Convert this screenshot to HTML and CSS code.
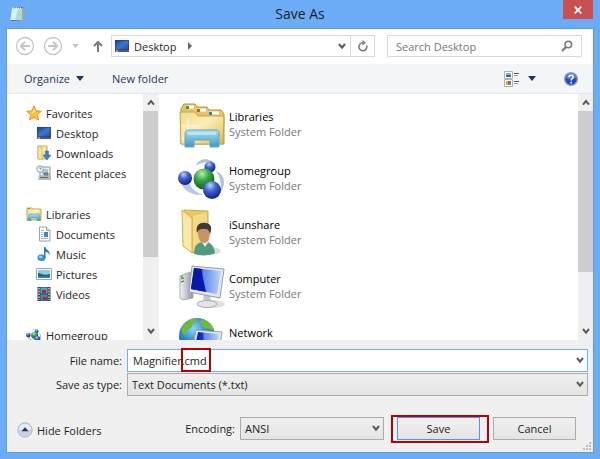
FILE: index.html
```html
<!DOCTYPE html>
<html lang="en">
<head>
    <meta charset="utf-8">
    <title>Save As</title>
    <link rel="stylesheet" href="styles.css">
</head>
<body>
    <!-- shared icons -->
    <svg class="defs" aria-hidden="true">
        <defs>
            <linearGradient id="screen" x1="0" y1="0" x2="1" y2="1">
                <stop offset="0" stop-color="#1c3f96"/>
                <stop offset=".5" stop-color="#3f74d0"/>
                <stop offset="1" stop-color="#2450a8"/>
            </linearGradient>
            <linearGradient id="folder" x1="0" y1="0" x2="1" y2="1">
                <stop offset="0" stop-color="#f3dc8c"/>
                <stop offset=".45" stop-color="#fbefb4"/>
                <stop offset="1" stop-color="#e2bb48"/>
            </linearGradient>
            <linearGradient id="stand" x1="0" y1="0" x2="0" y2="1">
                <stop offset="0" stop-color="#a9e0ee"/>
                <stop offset="1" stop-color="#3f97cf"/>
            </linearGradient>
            <radialGradient id="blueBall" cx=".4" cy=".25" r=".75">
                <stop offset="0" stop-color="#c4d6ff"/>
                <stop offset=".4" stop-color="#4468d8"/>
                <stop offset="1" stop-color="#13207e"/>
            </radialGradient>
            <radialGradient id="greenBall" cx=".4" cy=".25" r=".75">
                <stop offset="0" stop-color="#b5f0a8"/>
                <stop offset=".45" stop-color="#3aa544"/>
                <stop offset="1" stop-color="#0c5a20"/>
            </radialGradient>
            <radialGradient id="globe" cx=".4" cy=".3" r=".75">
                <stop offset="0" stop-color="#8fd6f6"/>
                <stop offset=".5" stop-color="#2b83cf"/>
                <stop offset="1" stop-color="#0d3b86"/>
            </radialGradient>
            <linearGradient id="monitor" x1="0" y1="0" x2="1" y2="0">
                <stop offset="0" stop-color="#0716a0"/>
                <stop offset=".35" stop-color="#1c34cc"/>
                <stop offset=".4" stop-color="#5f84ea"/>
                <stop offset="1" stop-color="#bcd4fa"/>
            </linearGradient>
            <linearGradient id="metal" x1="0" y1="0" x2="1" y2="0">
                <stop offset="0" stop-color="#f4f4f4"/>
                <stop offset="1" stop-color="#8f9499"/>
            </linearGradient>
        </defs>
        <symbol id="chevron-down" viewBox="0 0 8 7">
            <path d="M1 1l3 3.600L7 1" fill="none" stroke="#5a5a5a" stroke-width="2"/>
        </symbol>
        <symbol id="chevron-up" viewBox="0 0 8 7">
            <path d="M1 5.600l3-3.600 3 3.600" fill="none" stroke="#5a5a5a" stroke-width="2"/>
        </symbol>
        <symbol id="caret" viewBox="0 0 8 5">
            <path d="M0 0h8L4 5z" fill="#1c3560"/>
        </symbol>
        <symbol id="desktop" viewBox="0 0 16 16">
            <path d="M1 2h14v12H1z" fill="#22385f"/>
            <path d="M1.500 2.500h13v9h-13z" fill="url(#screen)"/>
            <path d="M1 12h14v2H1z" fill="#4c5c78"/>
            <path d="M2 12.500h2v1H2z" fill="#cfe2f4"/>
        </symbol>
        <symbol id="homegroup" viewBox="0 0 48 48">
            <path d="M18 12C20 3 34 3 38 12 34 7 24 7 18 12z" fill="#a9c4e4"/>
            <path d="M2 27c3 9 11 15 23 14-7-3-13-7-14-14z" fill="#b4cbe6"/>
            <path d="M38 17c9 4 10 13 5 21 0-7 0-14-5-21z" fill="#a9c4e4"/>
            <circle cx="32" cy="13" r="5.500" fill="url(#blueBall)"/>
            <circle cx="7" cy="24" r="7" fill="url(#blueBall)"/>
            <circle cx="26" cy="25" r="10.500" fill="url(#greenBall)"/>
            <circle cx="34" cy="36" r="9" fill="url(#blueBall)"/>
        </symbol>
    </svg>

    <div class="dialog">
        <header class="titlebar">
            <svg class="app-icon" viewBox="0 0 16 16" width="16" height="16">
                <path d="M3 2l11-1v13l-12 1z" fill="#5a6c70"/>
                <path d="M13 2h1.500v12l-1.500.5z" fill="#c9a15a"/>
                <path d="M3 2.500h10V14H1.500z" fill="#a5dde4"/>
                <path d="M3 2.500h6L6 14H1.500z" fill="#d6f1f0"/>
                <path d="M3 2.500h10" stroke="#e9f5f5" stroke-dasharray="1 1" stroke-width="2"/>
            </svg>
            <h1>Save As</h1>
            <button class="close" aria-label="Close">
                <svg viewBox="0 0 8 8" width="8" height="8"><path d="M.7.7l6.600 6.600M7.300.7L.7 7.300" stroke="#fff" stroke-width="1.800"/></svg>
            </button>
        </header>

        <div class="window">
            <nav class="navbar">
                <button class="round" aria-label="Back">
                    <svg viewBox="0 0 20 20" width="20" height="20" fill="none" stroke="#c6c6c6">
                        <circle cx="10" cy="10" r="8.500" stroke-width="1.300"/>
                        <path d="M15 10H6M10 5.800L5.800 10l4.200 4.200" stroke-width="2"/>
                    </svg>
                </button>
                <button class="round" aria-label="Forward">
                    <svg viewBox="0 0 20 20" width="20" height="20" fill="none" stroke="#c6c6c6">
                        <circle cx="10" cy="10" r="8.500" stroke-width="1.300"/>
                        <path d="M5 10h9M10 5.800l4.200 4.200-4.200 4.200" stroke-width="2"/>
                    </svg>
                </button>
                <button class="recent" aria-label="Recent locations">
                    <svg viewBox="0 0 8 5" width="7" height="4"><path d="M0 0h8L4 5z" fill="#c4c4c4"/></svg>
                </button>
                <button class="up" aria-label="Up">
                    <svg viewBox="0 0 10 12" width="10" height="12" fill="none" stroke="#7c7c7c" stroke-width="2"><path d="M5 12V2M1 6l4-4 4 4"/></svg>
                </button>
                <div class="address">
                    <a class="crumb" href="#">
                        <svg width="16" height="16"><use href="#desktop"/></svg>
                        Desktop
                    </a>
                    <svg class="crumb-arrow" viewBox="0 0 4 8" width="4" height="8"><path d="M0 0l4 4-4 4z" fill="#666"/></svg>
                    <button class="address-drop" aria-label="Previous locations">
                        <svg width="8" height="7"><use href="#chevron-down"/></svg>
                    </button>
                    <button class="refresh" aria-label="Refresh">
                        <svg viewBox="0 0 12 12" width="12" height="12"><path d="M9.700 5.500A4 4 0 1 1 6 2.700" fill="none" stroke="#7c7c7c" stroke-width="1.600"/><path d="M5.500 0L9 2.700 5.500 5.400z" fill="#7c7c7c"/></svg>
                    </button>
                </div>
                <div class="search">
                    <input type="search" placeholder="Search Desktop" aria-label="Search Desktop">
                    <svg viewBox="0 0 12 12" width="12" height="12" fill="none" stroke="#777"><circle cx="7.300" cy="4.500" r="3.300" stroke-width="1.600"/><path d="M5 7L1 11" stroke-width="2"/></svg>
                </div>
            </nav>

            <div class="toolbar">
                <button class="tool">Organize <svg width="8" height="5"><use href="#caret"/></svg></button>
                <button class="tool">New folder</button>
                <button class="tool view" aria-label="Change your view">
                    <svg viewBox="0 0 16 16" width="16" height="16">
                        <path d="M.5.5h8v7h-8zM.5 8.500h8v7h-8z" fill="#fff" stroke="#a9b3c0"/>
                        <path d="M2 2h5v2H2z" fill="#7fb7e6"/>
                        <path d="M2 4h5v2H2z" fill="#2f6f78"/>
                        <path d="M2 10h2v4H2z" fill="#e0a63a"/>
                        <path d="M4 10h3v2H4z" fill="#cf4e3f"/>
                        <path d="M4 12h3v2H4z" fill="#4aa655"/>
                        <path d="M10 2.500h5M10 10.500h5" stroke="#4a5a78"/>
                        <path d="M10 4.500h4M10 12.500h4" stroke="#9aa6b8"/>
                    </svg>
                    <svg width="8" height="5"><use href="#caret"/></svg>
                </button>
                <button class="help" aria-label="Help">
                    <svg viewBox="0 0 14 14" width="14" height="14">
                        <circle cx="7" cy="7" r="6.300" fill="#2348c4" stroke="#8f98a8" stroke-width="1.400"/>
                        <path d="M2 6a5 5 0 0 1 10 0C9 7.500 5 7.500 2 6z" fill="#6f95ea" opacity=".7"/>
                        <path d="M5 5.200C5 2.700 9.200 2.700 9.200 5.200 9.200 6.800 7.200 6.600 7.200 8.500M7.200 9.800v1.600" fill="none" stroke="#fff" stroke-width="1.500"/>
                    </svg>
                </button>
            </div>

            <div class="panes">
                <aside class="tree">
                    <ul class="group">
                        <li><a class="head" href="#"><svg viewBox="0 0 16 16" width="16" height="16"><path d="M8 1l2.100 4.800 5.200.5-3.900 3.500 1.100 5.100L8 12.300l-4.500 2.600 1.100-5.100L.7 6.300l5.200-.5z" fill="#fdc23c" stroke="#ea8f27"/><path d="M8 3l1.400 3.600-4.400 3z" fill="#ffe88a"/></svg>Favorites</a></li>
                        <li><a href="#"><svg width="16" height="16"><use href="#desktop"/></svg>Desktop</a></li>
                        <li><a href="#"><svg viewBox="0 0 16 16" width="16" height="16"><path d="M2 1h9v13H2z" fill="url(#folder)" stroke="#d0a94a"/><path d="M2 1l4 2v12l-4-1.500z" fill="#f8e6a0" stroke="#d0a94a" stroke-width=".6"/><path d="M9.500 6h3v4H15l-4 5-4-5h2.500z" fill="#2e86d8" stroke="#1b62b0" stroke-width=".5"/></svg>Downloads</a></li>
                        <li><a href="#"><svg viewBox="0 0 16 16" width="16" height="16"><path d="M4 2h10v9H4z" fill="#e8edf0" stroke="#90989e"/><path d="M6 4h6v5H6z" fill="#9cc9e6"/><path d="M3 11h12v4H2z" fill="#b3babf"/><path d="M4 12.500h8M8 8h4v2H8z" stroke="#626c74" fill="#7e99aa"/><circle cx="4" cy="4" r="3.300" fill="#f2f4f6" stroke="#9aa2a8"/><path d="M4 2v2h1.500" fill="none" stroke="#5d6870" stroke-width=".8"/></svg>Recent places</a></li>
                    </ul>
                    <ul class="group">
                        <li><a class="head" href="#"><svg viewBox="0 0 16 16" width="16" height="16"><path d="M1 2h5l1 1h8v11H1z" fill="url(#folder)" stroke="#cfa848"/><path d="M2 2.500h2" stroke="#4aa655"/><path d="M8 4.500h4" stroke="#fff"/><path d="M3 8h10l1.500 6.500H11V12H5v2.500H1.500z" fill="url(#stand)" stroke="#3b8fc8" stroke-width=".5"/></svg>Libraries</a></li>
                        <li><a href="#"><svg viewBox="0 0 16 16" width="16" height="16"><path d="M3.500 1h7L14 4.500V15H3.500z" fill="#fff" stroke="#9aa2aa"/><path d="M10.500 1v3.500H14" fill="#dfe5ea" stroke="#9aa2aa"/><path d="M8 6h4v5H8z" fill="#3f86c4"/><path d="M5 4.500h3M5 6.500h2M5 8.500h2M5 10.500h2M5 12.500h7" stroke="#a9b7c6"/></svg>Documents</a></li>
                        <li><a href="#"><svg viewBox="0 0 16 16" width="16" height="16"><ellipse cx="5.500" cy="11.800" rx="4" ry="3.200" fill="#2f8fdc"/><path d="M8 1h1.500c.3 3 5 3.500 4 8-.7-2-2.300-3-4-3v6H8z" fill="#2878c4"/><ellipse cx="4.700" cy="11" rx="1.800" ry="1.200" fill="#9ad3f6"/></svg>Music</a></li>
                        <li><a href="#"><svg viewBox="0 0 16 16" width="16" height="16"><path d="M.5 2.500h15v11H.5z" fill="#fff" stroke="#9fa6ad"/><path d="M2 4h12v8H2z" fill="#8ccdf2"/><path d="M2 7c3 0 5 3 12 1v4H2z" fill="#24695a"/><path d="M2 10.500h12V12H2z" fill="#2d86be"/></svg>Pictures</a></li>
                        <li><a href="#"><svg viewBox="0 0 16 16" width="16" height="16"><path d="M1.500 1h13v14h-13z" fill="#3a4650"/><path d="M4.500 1.500h7v6h-7z" fill="#5aa0c8"/><path d="M4.500 8.500h7v6h-7z" fill="#3e86b4"/><path d="M6 4h4v3.500H6zM7 11h4v3H7z" fill="#8c3a32"/><path d="M3 2v12M13 2v12" stroke="#cdd6dc" stroke-width="1.400" stroke-dasharray="1.500 1.300"/></svg>Videos</a></li>
                    </ul>
                    <ul class="group">
                        <li><a class="head" href="#"><svg width="16" height="16"><use href="#homegroup"/></svg>Homegroup</a></li>
                    </ul>
                </aside>
                <div class="scrollbar">
                    <button aria-label="Scroll up"><svg width="8" height="7"><use href="#chevron-up"/></svg></button>
                    <div class="track"><div class="thumb tree-thumb"></div></div>
                    <button aria-label="Scroll down"><svg width="8" height="7"><use href="#chevron-down"/></svg></button>
                </div>

                <main class="files">
                    <a class="file" href="#">
                        <svg viewBox="0 0 48 48" width="48" height="48">
                            <path d="M3 9l3-5h11l2 3h10l2 3h12l3 4v30H3z" fill="#e6c566" stroke="#b8913a"/>
                            <path d="M8 5.500h8v3H8zM19 8.500h9v3h-9zM31 11.500h10v3H31z" fill="#fff"/>
                            <path d="M8 6h3v3H8z" fill="#3ba04c"/>
                            <path d="M19 9h3v3h-3z" fill="#dd5530"/>
                            <path d="M31 12h3v3h-3z" fill="#3280cc"/>
                            <path d="M2 12h15l3 4h23c2 0 3 1 3 2l-1 26H3z" fill="url(#folder)" stroke="#c9a24a"/>
                            <path d="M10 18v18M4 26h16" stroke="#fffbe2" stroke-width="2" opacity=".5"/>
                            <path d="M10 30h28c3 0 3 2 3 5v12h-9v-7H16v7H7V35c0-4 1-5 3-5z" fill="url(#stand)" stroke="#5ba9d2"/>
                            <path d="M10 32h28v3H10z" fill="#d4f2f7" opacity=".6"/>
                        </svg>
                        <span class="name">Libraries</span>
                        <span class="kind">System Folder</span>
                    </a>
                    <a class="file" href="#">
                        <svg width="48" height="48"><use href="#homegroup"/></svg>
                        <span class="name">Homegroup</span>
                        <span class="kind">System Folder</span>
                    </a>
                    <a class="file" href="#">
                        <svg viewBox="0 0 48 48" width="48" height="48">
                            <ellipse cx="32" cy="43" rx="11" ry="4" fill="#dcdcdc"/>
                            <path d="M6 2l24 1v37l-16 5z" fill="#e9c860" stroke="#cfaa49"/>
                            <path d="M15 8l14-4v34l-14 6z" fill="#f3da83"/>
                            <path d="M4 2l10 8v35L5 38z" fill="#f9e9a8" stroke="#d3ae4d"/>
                            <path d="M16 46c0-9 4-12 10-12s10 3 11 11c-5 3-15 3-21 1z" fill="#4f9a80"/>
                            <path d="M23 33l4 6 4-6z" fill="#e3efe8"/>
                            <path d="M20 24c0-8 12-8 12 0 0 6-2 11-6 11s-6-5-6-11z" fill="#c99362"/>
                            <path d="M19 25c-2-9 4-11 9-10 6 1 6 6 4 11-1-4-2-5-6-5s-5 0-7 4z" fill="#3d3b3a"/>
                        </svg>
                        <span class="name">iSunshare</span>
                        <span class="kind">System Folder</span>
                    </a>
                    <a class="file" href="#">
                        <svg viewBox="0 0 48 48" width="48" height="48">
                            <ellipse cx="33" cy="42" rx="14" ry="4" fill="#e0e0e0"/>
                            <path d="M2 14l10-4 3 2v24L5 38l-3-2z" fill="url(#metal)" stroke="#a8acb0"/>
                            <path d="M3 17l3-1M3 20l3-1" stroke="#555"/>
                            <path d="M3 14l2-.5v3l-2 .5z" fill="#55c843"/>
                            <path d="M26 31l6 1 1 9h-8z" fill="#c4c8cc"/>
                            <ellipse cx="29" cy="42" rx="10" ry="3.500" fill="#e2e4e6" stroke="#a9adb1"/>
                            <path d="M14 4l32 3-4 29-31-6z" fill="#e4e6e8" stroke="#989ea4"/>
                            <path d="M16 6l27 3-4 23-26-5z" fill="url(#monitor)"/>
                            <path d="M16 6l7 1 5 23-15-3z" fill="#0818a8"/>
                        </svg>
                        <span class="name">Computer</span>
                        <span class="kind">System Folder</span>
                    </a>
                    <a class="file" href="#">
                        <svg viewBox="0 0 48 48" width="48" height="48">
                            <circle cx="19" cy="20" r="18" fill="url(#globe)"/>
                            <path d="M5 9c5-6 9-7 14-6-1 4-4 3-5 7-2 4-6 3-7 9-3 0-4-4-2-10zM23 3c7 1 11 5 13 11-4 1-5-2-8-1-4-2-7-6-5-10zM6 24c4 0 8 3 9 8l-3 4c-4-2-7-6-6-12z" fill="#6dbb3c"/>
                            <path d="M18 14l26 2-4 26-26-5z" fill="#e4e6e8" stroke="#989ea4"/>
                            <path d="M20 16l21 2-3 22-22-4z" fill="url(#monitor)"/>
                        </svg>
                        <span class="name">Network</span>
                    </a>
                </main>
                <div class="scrollbar">
                    <button aria-label="Scroll up"><svg width="8" height="7"><use href="#chevron-up"/></svg></button>
                    <div class="track"><div class="thumb files-thumb"></div></div>
                    <button aria-label="Scroll down"><svg width="8" height="7"><use href="#chevron-down"/></svg></button>
                </div>
            </div>

            <form class="footer">
                <div class="fields">
                    <label for="filename">File name:</label>
                    <div class="combo">
                        <input id="filename" class="filename" type="text" value="Magnifier.cmd">
                        <span class="mark mark-ext"></span>
                        <svg class="combo-arrow" width="8" height="7"><use href="#chevron-down"/></svg>
                    </div>
                    <label for="filetype">Save as type:</label>
                    <div class="combo">
                        <select id="filetype"><option>Text Documents (*.txt)</option><option>All Files</option></select>
                        <svg class="combo-arrow" width="8" height="7"><use href="#chevron-down"/></svg>
                    </div>
                </div>
                <div class="actions">
                    <button type="button" class="hide">
                        <svg viewBox="0 0 18 18" width="16" height="16">
                            <circle cx="9" cy="9" r="8" fill="#e3ebf3" stroke="#9ba6b4"/>
                            <path d="M2 9a7 7 0 0 0 14 0z" fill="#c3d2e2"/>
                            <path d="M5 10.500l4-4.500 4 4.500z" fill="#1f3564"/>
                        </svg>
                        Hide Folders
                    </button>
                    <label for="encoding">Encoding:</label>
                    <div class="combo encoding">
                        <select id="encoding"><option>ANSI</option><option>Unicode</option><option>UTF-8</option></select>
                        <svg class="combo-arrow" width="8" height="7"><use href="#chevron-down"/></svg>
                    </div>
                    <div class="save-wrap">
                        <button type="button" class="btn save">Save</button>
                        <span class="mark mark-save"></span>
                    </div>
                    <button type="button" class="btn">Cancel</button>
                </div>
                <svg class="grip" viewBox="0 0 8 8" width="8" height="8" fill="#bdbdbd"><path d="M6 0h2v2H6zM3 3h2v2H3zM6 3h2v2H6zM0 6h2v2H0zM3 6h2v2H3zM6 6h2v2H6z"/></svg>
            </form>
        </div>
    </div>
</body>
</html>
```
FILE: styles.css
```css
* {
    box-sizing: border-box;
}

body {
    margin: 0;
    font-family: "Open Sans", "Noto Sans", sans-serif;
    font-size: 11px;
    line-height: 15px;
    color: #1e1e1e;
}

button, input, select {
    font: inherit;
    color: inherit;
}

button {
    padding: 0;
    border: none;
    background: none;
}

a {
    color: inherit;
    text-decoration: none;
}

svg {
    display: block;
    flex: none;
}

.defs {
    position: absolute;
    width: 0;
    height: 0;
}

.dialog {
    display: flex;
    flex-direction: column;
    height: 100vh;
    padding: 0 7px 7px;
    background-color: #6cacf7;
}

/* title bar */
.titlebar {
    display: grid;
    grid-template-columns: 30px 1fr 30px;
    height: 29px;
}

.app-icon {
    margin: 6px 2px;
}

.titlebar h1 {
    margin: 0;
    font-size: 14px;
    font-weight: normal;
    line-height: 28px;
    text-align: center;
}

.close {
    display: flex;
    align-items: center;
    justify-content: center;
    height: 19px;
    background-color: #c75050;
}

.window {
    flex: 1;
    display: flex;
    flex-direction: column;
    min-height: 0;
    background-color: #fff;
    box-shadow: 0 0 0 1px #5f9be2;
}

/* navigation */
.navbar {
    display: flex;
    align-items: center;
    padding: 6px 11px 7px 8px;
}

.round {
    margin-right: 8px;
}

.recent {
    margin: 0 14px 0 1px;
}

.up {
    margin-right: 8px;
}

.address {
    flex: 262;
    display: flex;
    align-items: center;
    height: 22px;
    border: 1px solid #d9d9d9;
}

.crumb {
    display: flex;
    align-items: center;
    gap: 4px;
    padding-left: 2px;
}

.crumb-arrow {
    margin-left: 12px;
}

.address-drop {
    margin-left: auto;
    padding: 6px 4px;
}

.refresh {
    display: flex;
    align-items: center;
    justify-content: center;
    width: 24px;
    height: 20px;
    border-left: 1px solid #d9d9d9;
}

.search {
    flex: 177;
    display: flex;
    align-items: center;
    height: 22px;
    margin-left: 12px;
    padding: 0 8px;
    border: 1px solid #d9d9d9;
}

.search input {
    flex: 1;
    min-width: 0;
    padding: 0;
    border: none;
    outline: none;
    background: none;
}

.search input::placeholder {
    color: #777;
}

/* toolbar */
.toolbar {
    display: flex;
    align-items: center;
    gap: 28px;
    height: 30px;
    padding: 0 15px 0 17px;
    background-color: #f4f5f7;
    border-bottom: 1px solid #e6e7e9;
    color: #24395f;
}

.tool {
    display: flex;
    align-items: center;
    gap: 6px;
}

.view {
    gap: 8px;
    margin-left: auto;
}

/* folder tree and file list */
.panes {
    flex: 1;
    display: grid;
    grid-template-columns: 136fr 15px 420fr 15px;
    grid-template-rows: 100%;
    min-height: 0;
    overflow: hidden;
}

.tree {
    padding: 9px 0 0 19px;
    overflow: hidden;
}

.group {
    margin: 0 0 21px;
    padding: 0;
    list-style: none;
}

.group a {
    display: flex;
    align-items: center;
    gap: 4px;
    height: 20px;
    padding-left: 10px;
    white-space: nowrap;
}

.group .head {
    padding-left: 0;
}

.scrollbar {
    display: flex;
    flex-direction: column;
    background-color: #f0f0f0;
}

.scrollbar button {
    display: flex;
    align-items: center;
    justify-content: center;
    height: 17px;
}

.track {
    flex: 1;
}

.thumb {
    background-color: #cdcdcd;
}

.tree-thumb {
    height: 69%;
}

.files-thumb {
    height: 76%;
}

.files {
    padding: 3px 0 0 19px;
    border-left: 1px solid #f0f0f0;
    overflow: hidden;
}

.file {
    display: grid;
    grid-template-columns: 48px 1fr;
    grid-template-rows: 15px 15px;
    align-content: center;
    column-gap: 3px;
    height: 54px;
}

.file svg {
    grid-row: 1 / 3;
    align-self: center;
}

.name {
    color: #000;
}

.kind {
    color: #777;
}

/* bottom area */
.footer {
    position: relative;
    padding: 9px 5px 12px 10px;
    background-color: #f0f0f0;
}

.fields {
    display: grid;
    grid-template-columns: 105px 1fr;
    column-gap: 5px;
    row-gap: 1px;
    align-items: center;
}

.fields label {
    text-align: right;
}

.combo {
    position: relative;
}

.combo input,
.combo select {
    display: block;
    width: 100%;
    height: 23px;
    padding: 0 20px 0 4px;
    border: 1px solid #acacac;
    border-radius: 0;
    background: linear-gradient(#efefef, #e4e4e4);
    appearance: none;
    outline: none;
}

.combo .filename {
    padding-left: 5px;
    border-color: #6fb0ee;
    background: #fff;
}

.combo-arrow {
    position: absolute;
    top: 8px;
    right: 4px;
    pointer-events: none;
}

/* red callout boxes */
.mark {
    position: absolute;
    border: 2px solid #b50005;
    pointer-events: none;
}

.mark-ext {
    top: -1px;
    left: 54px;
    width: 30px;
    height: 24px;
}

.mark-save {
    top: -2px;
    left: -6px;
    right: -9px;
    bottom: -3px;
}

.actions {
    display: flex;
    align-items: center;
    margin-top: 21px;
    padding-right: 12px;
}

.hide {
    display: flex;
    align-items: center;
    gap: 4px;
    margin-right: auto;
    padding-top: 3px;
}

.encoding {
    width: 144px;
    margin: 0 13px 0 5px;
}

.save-wrap {
    position: relative;
    margin-right: 13px;
}

.btn {
    display: block;
    width: 83px;
    height: 23px;
    border: 1px solid #acacac;
    background: linear-gradient(#f0f0f0, #e4e4e4);
}

.save {
    border-color: #4a9ceb;
}

.grip {
    position: absolute;
    right: 2px;
    bottom: 2px;
}
```
